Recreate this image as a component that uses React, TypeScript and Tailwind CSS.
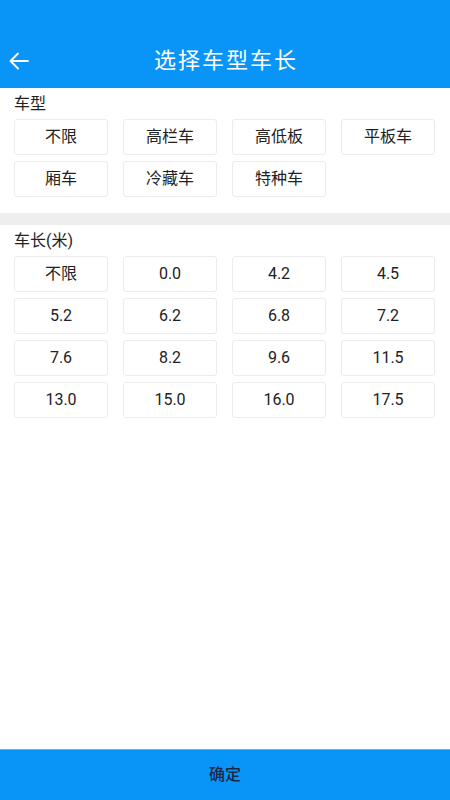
import React from "react";

const types = ["不限", "高栏车", "高低板", "平板车", "厢车", "冷藏车", "特种车"];
const lengths = [
  "不限", "0.0", "4.2", "4.5",
  "5.2", "6.2", "6.8", "7.2",
  "7.6", "8.2", "9.6", "11.5",
  "13.0", "15.0", "16.0", "17.5",
];

const Option = ({ label }: { label: string }) => (
  <div className="h-[36px] flex items-center justify-center border border-[#ececec] rounded-[3px] bg-white text-[16px] text-[#222]">
    {label}
  </div>
);

const App = () => {
  return (
    <div
      className="w-[450px] h-[800px] bg-white flex flex-col"
      style={{ fontFamily: 'Roboto, "Noto Sans CJK SC", sans-serif' }}
    >
      <header className="h-[88px] bg-[#0994f8] flex items-end pb-[13px] relative shrink-0">
        <svg className="absolute left-[8px] top-[51px]" width="22" height="20" viewBox="0 0 22 20" fill="none">
          <path d="M20 10H2.5M10 2.5L2.5 10L10 17.5" stroke="white" strokeWidth="1.8" strokeLinecap="round" strokeLinejoin="round" />
        </svg>
        <div className="w-full text-center text-white text-[22px] tracking-[2px] leading-[28px] pl-[2px]">选择车型车长</div>
      </header>

      <section className="px-[14px] pr-[15px] pt-[5px] pb-[16px]">
        <div className="text-[16px] text-[#222] leading-[22px] mb-[4px]">车型</div>
        <div className="grid grid-cols-4 gap-x-[15px] gap-y-[6px]">
          {types.map((t) => (
            <Option key={t} label={t} />
          ))}
        </div>
      </section>

      <div className="h-[12px] bg-[#eeeeee] shrink-0" />

      <section className="px-[14px] pr-[15px] pt-[5px] flex-1">
        <div className="text-[16px] text-[#222] leading-[22px] mb-[4px]">车长(米)</div>
        <div className="grid grid-cols-4 gap-x-[15px] gap-y-[6px]">
          {lengths.map((l, i) => (
            <Option key={i} label={l} />
          ))}
        </div>
      </section>

      <button className="h-[51px] bg-[#0994f8] text-[#1a2744] text-[16px] font-medium shrink-0 border-t border-[#5bb6fb]">
        确定
      </button>
    </div>
  );
};

export default App;
